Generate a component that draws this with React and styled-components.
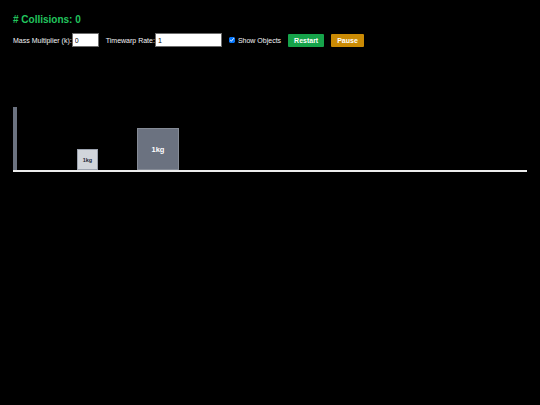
import React, { useState } from "react";
import styled, { createGlobalStyle } from "styled-components";

const Global = createGlobalStyle`
  html, body { margin: 0; padding: 0; background: #000; }
  body { font-family: "Liberation Sans", Arial, sans-serif; color: #fff; }
`;

const Page = styled.div`
  padding: 14px 13px 0 13px;
  width: 540px;
  height: 405px;
  box-sizing: border-box;
  background: #000;
`;

const Title = styled.h1`
  margin: 0;
  font-size: 10px;
  line-height: 12px;
  font-weight: 700;
  color: #22c55e;
`;

const Controls = styled.div`
  margin-top: 7px;
  display: flex;
  align-items: center;
  height: 14px;
  font-size: 7px;
  color: #f3f4f6;
  gap: 7px;
`;

const Field = styled.label`
  display: flex;
  align-items: center;
  white-space: nowrap;
  gap: ${(p) => p.$gap || 0}px;
`;

const TextInput = styled.input`
  width: ${(p) => p.$w}px;
  height: 14px;
  box-sizing: border-box;
  margin: 0;
  padding: 0 2px;
  border: 1px solid #6b6b6b;
  border-radius: 0;
  background: #fff;
  color: #000;
  font-family: "Liberation Sans", Arial, sans-serif;
  font-size: 7px;
  outline: none;
`;

const Check = styled.input`
  width: 6px;
  height: 6px;
  margin: 0;
`;

const Button = styled.button`
  height: 13px;
  box-sizing: border-box;
  padding: 0 6px;
  margin: 0;
  border: none;
  border-radius: 1px;
  background: ${(p) => p.$bg};
  color: #fff;
  font-family: "Liberation Sans", Arial, sans-serif;
  font-size: 7px;
  font-weight: 700;
  cursor: pointer;
`;

const Canvas = styled.div`
  position: relative;
  margin-top: 60px;
  height: 63px;
  border-bottom: 2px solid #ececec;
`;

const Wall = styled.div`
  position: absolute;
  left: 0;
  bottom: 0;
  width: 4px;
  height: 63px;
  background: #6b7280;
`;

const Block = styled.div`
  position: absolute;
  bottom: 0;
  box-sizing: border-box;
  display: flex;
  align-items: center;
  justify-content: center;
  font-weight: 700;
  border: 1px solid ${(p) => p.$border};
  background: ${(p) => p.$bg};
  color: ${(p) => p.$color};
  font-size: ${(p) => p.$fs}px;
`;

const blocks = [
  { x: 64, size: 21, bg: "#d1d5db", border: "#9ca3af", color: "#1f2937", fs: 5.5 },
  { x: 124, size: 42, bg: "#6b7280", border: "#858b96", color: "#ffffff", fs: 7.5 },
];

export default function App() {
  const [k, setK] = useState("0");
  const [rate, setRate] = useState("1");
  const [show, setShow] = useState(true);
  return (
    <Page>
      <Global />
      <Title># Collisions: 0</Title>
      <Controls>
        <Field>
          Mass Multiplier (k):
          <TextInput $w={27} value={k} onChange={(e) => setK(e.target.value)} />
        </Field>
        <Field>
          Timewarp Rate:
          <TextInput $w={67} value={rate} onChange={(e) => setRate(e.target.value)} />
        </Field>
        <Field $gap={3}>
          <Check type="checkbox" checked={show} onChange={(e) => setShow(e.target.checked)} />
          Show Objects
        </Field>
        <Button $bg="#16a34a">Restart</Button>
        <Button $bg="#ca8a04">Pause</Button>
      </Controls>
      <Canvas>
        <Wall />
        {show &&
          blocks.map((b, i) => (
            <Block
              key={i}
              $bg={b.bg}
              $border={b.border}
              $color={b.color}
              $fs={b.fs}
              style={{ left: b.x, width: b.size, height: b.size }}
            >
              1kg
            </Block>
          ))}
      </Canvas>
    </Page>
  );
}
